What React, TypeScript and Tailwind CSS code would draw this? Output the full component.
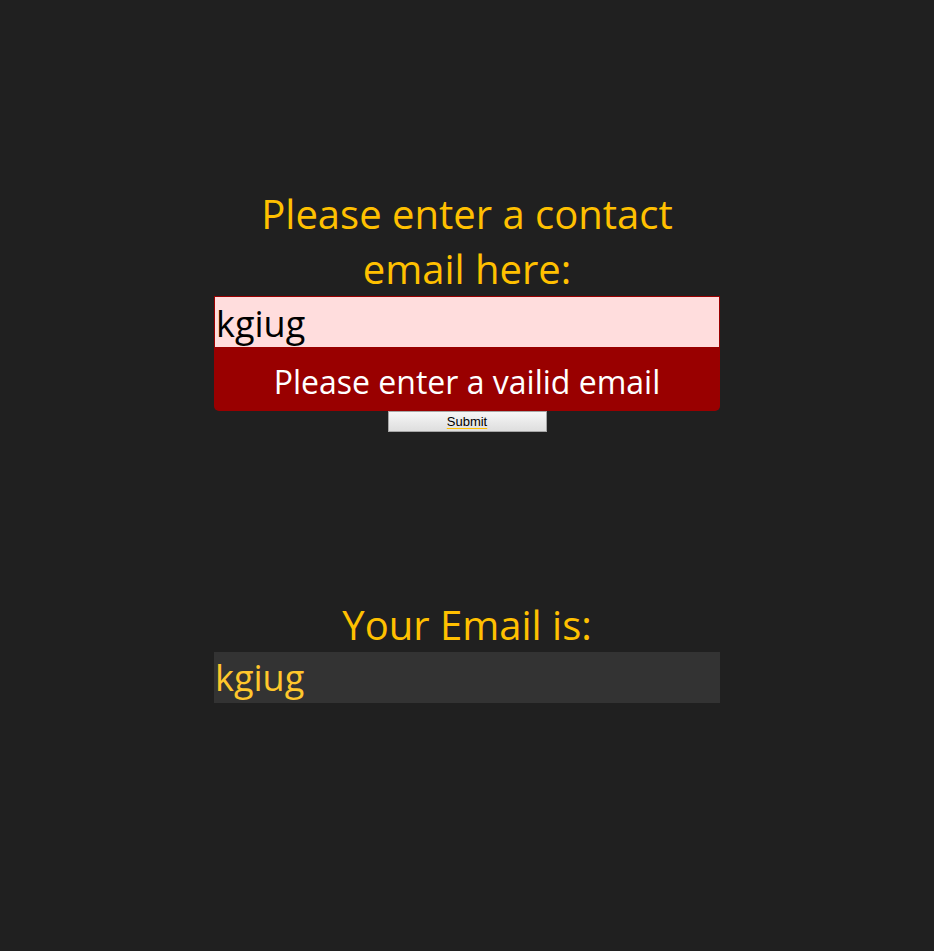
import React, { useState } from "react";

const App: React.FC = () => {
  const [value, setValue] = useState("kgiug");
  const [submitted] = useState("kgiug");
  const isValid = /\S+@\S+\.\S+/.test(value);

  return (
    <div
      className="min-h-[951px] w-full bg-[#202020] pt-[187px]"
      style={{ fontFamily: '"Open Sans", sans-serif' }}
    >
      <div className="mx-auto flex w-[506px] flex-col items-center">
        <h1 className="text-center text-[40px] leading-[54.5px] font-normal text-[#ffc000]">
          Please enter a contact
          <br />
          email here:
        </h1>

        <div className="w-full">
          <input
            type="text"
            value={value}
            onChange={(e) => setValue(e.target.value)}
            className="block h-[52px] w-full border border-[#990000] bg-[#ffdddd] px-[1px] pt-[2px] text-[36px] leading-none text-black outline-none"
          />
          {!isValid && (
            <div className="flex h-[63px] w-full items-center justify-center rounded-b-[5px] bg-[#990000] pt-[4px] text-[32px] text-white">
              Please enter a vailid email
            </div>
          )}
        </div>

        <button
          type="button"
          className="h-[21px] w-[159px] border border-[#a6a6a6] bg-gradient-to-b from-[#f6f6f6] to-[#dedede] text-[13px] leading-none text-black underline decoration-[#ffc000] underline-offset-2"
          style={{ fontFamily: '"Liberation Sans", Arial, sans-serif' }}
        >
          Submit
        </button>

        <h2 className="mt-[166px] text-center text-[40px] leading-[54px] font-normal text-[#ffc000]">
          Your Email is:
        </h2>
        <div className="flex h-[51px] w-full items-center bg-[#333333] px-[1px] text-[36px] leading-none text-[#ffc72c]">
          {submitted}
        </div>
      </div>
    </div>
  );
};

export default App;
